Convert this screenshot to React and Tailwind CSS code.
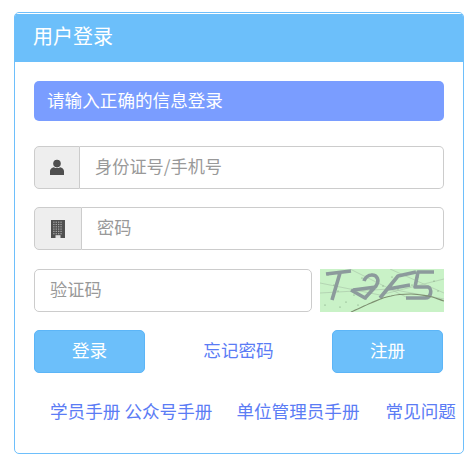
const font = { fontFamily: '"Noto Sans CJK SC", sans-serif' }

function UserIcon() {
  return (
    <svg width="16" height="17" viewBox="0 0 16 17">
      <circle cx="8" cy="4.6" r="3.8" fill="#4f4f4f" />
      <path d="M1 16V12C1 10 3 8.6 4.8 8.2C6.6 9.4 9.4 9.4 11.2 8.2C13 8.6 15 10 15 12V16Z" fill="#4f4f4f" />
    </svg>
  )
}

function BuildingIcon() {
  const cells = []
  for (let y = 0; y < 6; y++) {
    for (let x = 0; x < 4; x++) {
      cells.push(<rect key={x + '-' + y} x={2.2 + x * 2.4} y={1.6 + y * 2.3} width="1.3" height="1.2" fill="#a9a9a9" />)
    }
  }
  return (
    <svg width="14" height="18" viewBox="0 0 14 18">
      <rect width="14" height="18" fill="#505050" />
      {cells}
      <rect x="4.5" y="15.2" width="5" height="2.8" fill="#e2e2e2" />
    </svg>
  )
}

function Captcha() {
  return (
    <svg width="124" height="43" viewBox="0 0 124 43" className="block shrink-0">
      <rect width="124" height="43" fill="#c9f2c7" />
      <g stroke="#9fb7a0" strokeWidth="0.6" opacity="0.8" fill="none">
        <path d="M0 14L60 26L124 10" />
        <path d="M0 24L70 20L124 30" />
        <path d="M30 0L90 30" />
        <path d="M70 0L124 24" />
      </g>
      <g fill="#4f6f50" opacity="0.7">
        <circle cx="8" cy="6" r="0.6" /><circle cx="18" cy="22" r="0.6" /><circle cx="26" cy="33" r="0.6" />
        <circle cx="42" cy="9" r="0.6" /><circle cx="52" cy="5" r="0.6" /><circle cx="63" cy="17" r="0.6" />
        <circle cx="72" cy="8" r="0.6" /><circle cx="84" cy="5" r="0.6" /><circle cx="92" cy="16" r="0.6" />
        <circle cx="104" cy="28" r="0.6" /><circle cx="114" cy="12" r="0.6" /><circle cx="12" cy="28" r="0.6" />
        <circle cx="34" cy="26" r="0.6" /><circle cx="5" cy="36" r="0.6" /><circle cx="46" cy="30" r="0.6" />
        <circle cx="98" cy="8" r="0.6" /><circle cx="118" cy="22" r="0.6" /><circle cx="78" cy="20" r="0.6" />
        <circle cx="20" cy="38" r="0.6" /><circle cx="14" cy="16" r="0.6" /><circle cx="38" cy="36" r="0.6" />
      </g>
      <g fill="none" stroke="#8c9a9c" strokeWidth="3.6" strokeLinejoin="round">
        <path d="M6 5L31 2M20 4L12 31" />
        <path d="M31 21L45 29L56 17C60 11 57 6 52 6C48 6 45 9 44 12M33 21L56 18" />
        <path d="M60 29L78 7L96 3M68 20L90 16" />
        <path d="M114 3H98L95 18H108C112 19 112 29 105 29H86" />
      </g>
      <path d="M31 43C38 40 44 37 51 34C58 31 64 28 71 27C78 25 85 25 91 25C97 25 102 26 108 27C114 28 120 31 124 32" fill="none" stroke="#7d8f70" strokeWidth="1.2" />
    </svg>
  )
}

export default function App() {
  return (
    <div className="w-[474px] h-[464px] bg-white pt-3 pl-3.5 text-[17.6px]" style={font}>
      <div className="w-[450px] h-[442px] border border-[#6ebffb] rounded-[5px] overflow-hidden bg-white flex flex-col">
        {/* Header */}
        <div className="h-[49px] border-t border-white bg-[#6cbffa] text-white text-[20px] leading-[44px] pl-[18px] shrink-0">用户登录</div>

        <div className="pt-[19px] pl-[19px] pr-[19px] flex flex-col">
          <div className="h-10 w-[410px] rounded-[5px] bg-[#7a9dff] text-white leading-[37px] pl-[13px]">请输入正确的信息登录</div>

          {/* Account */}
          <div className="flex h-[43px] w-[410px] mt-[25px]">
            <div className="w-[46px] flex items-center justify-center bg-[#eeeeee] border border-[#cccccc] rounded-l-[5px]"><UserIcon /></div>
            <div className="flex-1 border border-l-0 border-[#cccccc] rounded-r-[5px] text-[#999999] text-[17.2px] leading-[37px] pl-[15px]">身份证号/手机号</div>
          </div>

          {/* Password */}
          <div className="flex h-[43px] w-[410px] mt-[18px]">
            <div className="w-[48px] flex items-center justify-center bg-[#eeeeee] border border-[#cccccc] rounded-l-[5px]"><BuildingIcon /></div>
            <div className="flex-1 border border-l-0 border-[#cccccc] rounded-r-[5px] text-[#999999] text-[17.2px] leading-[38px] pl-[15px]">密码</div>
          </div>

          {/* Captcha */}
          <div className="flex justify-between w-[410px] mt-[19px]">
            <div className="w-[278px] h-[43px] border border-[#cccccc] rounded-[5px] text-[#999999] text-[17.2px] leading-[38px] pl-[15px]">验证码</div>
            <Captcha />
          </div>

          {/* Buttons */}
          <div className="flex items-center justify-between w-[409px] mt-[18px]">
            <div className="w-[111px] h-[43px] bg-[#6cbffa] border border-[#5cb5f7] rounded-[5px] text-white text-center leading-[38px]">登录</div>
            <div className="text-[#5b7cf5] leading-[38px] pb-[3px]">忘记密码</div>
            <div className="w-[111px] h-[43px] bg-[#6cbffa] border border-[#5cb5f7] rounded-[5px] text-white text-center leading-[38px]">注册</div>
          </div>

          {/* Links */}
          <div className="flex text-[#5b7cf5] mt-[26px] ml-[16px] whitespace-nowrap leading-6 w-[420px]">
            <span>学员手册</span>
            <span className="ml-[4px]">公众号手册</span>
            <span className="ml-[24px]">单位管理员手册</span>
            <span className="ml-[26px]">常见问题</span>
          </div>
        </div>
      </div>
    </div>
  )
}
